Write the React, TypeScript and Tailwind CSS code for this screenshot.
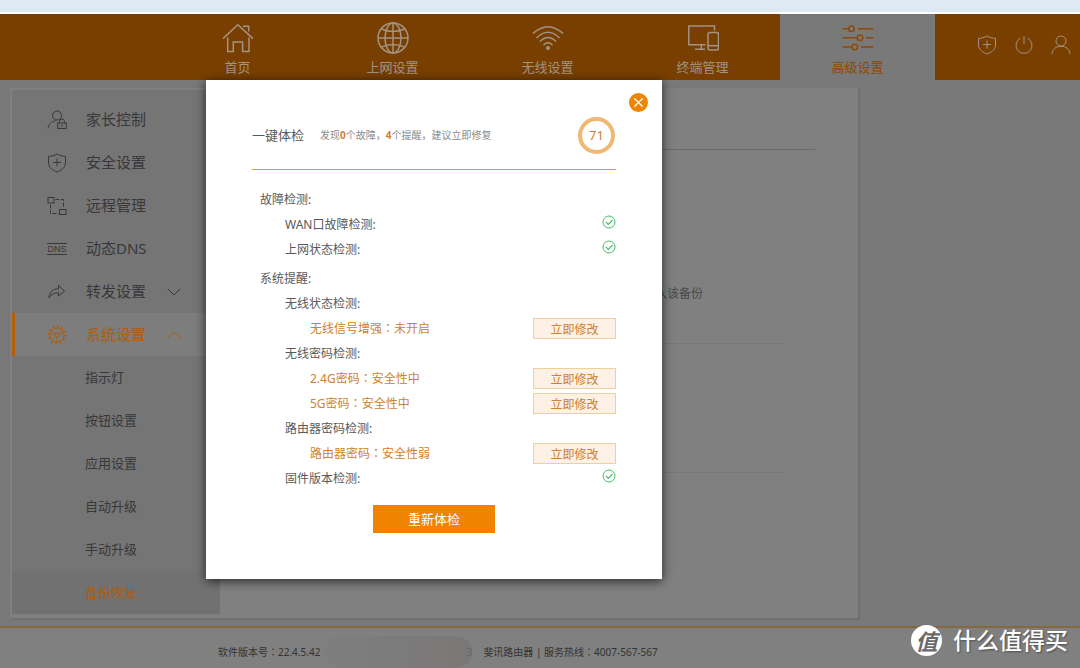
import type { ReactNode } from "react"
import { ChevronDown, ChevronUp, X } from "lucide-react"
import clsx from "clsx"

interface NavItem {
  label: string
  icon: ReactNode
  active?: boolean
}

interface SideItem {
  label: string
  icon: ReactNode
  active?: boolean
  chevron?: 'up' | 'down'
}

interface CheckRow {
  label: string
  value?: string
  level: 0 | 1 | 2
  status?: 'ok' | 'fix'
}

function NavIcon({ children }: { children: ReactNode }) {
  return (
    <svg className="size-8" viewBox="0 0 32 32" fill="none" stroke="currentColor" strokeWidth="1.5" aria-hidden="true">
      {children}
    </svg>
  )
}

function SmallIcon({ children }: { children: ReactNode }) {
  return (
    <svg className="size-5" viewBox="0 0 20 20" fill="none" stroke="currentColor" strokeWidth="1" aria-hidden="true">
      {children}
    </svg>
  )
}

// Full-width colon centred in its em box
function Colon() {
  return <span lang="zh-TW" className="font-['Noto_Sans_CJK_TC',sans-serif]">：</span>
}

const shieldPath = (
  <>
    <path d="M10 1 C7.5 2.6 4.5 3.3 1.5 3.4 V10 C1.5 14.5 6 17.6 10 19 C14 17.6 18.5 14.5 18.5 10 V3.4 C15.5 3.3 12.5 2.6 10 1 Z" />
    <path d="M10 5.5 V13.5 M6 9.5 H14" />
  </>
)

const navItems: NavItem[] = [
  {
    label: '首页',
    icon: (
      <NavIcon>
        <path d="M1 16.6 L15.8 2.8 L31 16.6 M21 4.2 H26.7 V9.5 M5.7 15.5 V29.5 H11.3 V20 H20.6 V29.5 H27 V15.5" />
      </NavIcon>
    ),
  },
  {
    label: '上网设置',
    icon: (
      <NavIcon>
        <circle cx="16" cy="16" r="15" />
        <ellipse cx="16" cy="16" rx="8" ry="15" />
        <path d="M16 1 V31 M1 16 H31 M4.5 7 Q16 12 27.5 7 M4.5 25 Q16 20 27.5 25" />
      </NavIcon>
    ),
  },
  {
    label: '无线设置',
    icon: (
      <NavIcon>
        <path d="M1 11.5 Q16 -2 31 11.5 M4.5 16 Q16 4.5 27.5 16 M8 19.5 Q16 11.5 24 19.5 M11.5 23 Q16 18.5 20.5 23" />
        <circle cx="16" cy="26" r="1.3" fill="currentColor" />
      </NavIcon>
    ),
  },
  {
    label: '终端管理',
    icon: (
      <NavIcon>
        <path d="M27.5 8.5 V4 H1.8 V22.7 H18.5 M14.3 23 V27 M8 27.3 H18" />
        <rect x="21" y="10.5" width="10.5" height="17.5" rx="2" />
        <path d="M21 23.7 H31.5" />
      </NavIcon>
    ),
  },
  {
    label: '高级设置',
    active: true,
    icon: (
      <NavIcon>
        <path d="M0.5 6.7 H6.5 M16 6.7 H31.5 M0.5 15.7 H15 M24 15.7 H31.5 M0.5 25 H9.7 M19 25 H31.5" />
        <circle cx="9.5" cy="6.7" r="2.8" />
        <circle cx="18" cy="15.7" r="2.8" />
        <circle cx="12.8" cy="25" r="2.8" />
      </NavIcon>
    ),
  },
]

const tools = [
  { label: '安全', icon: <SmallIcon>{shieldPath}</SmallIcon> },
  {
    label: '退出',
    icon: (
      <SmallIcon>
        <path d="M6.5 3.2 A8 8 0 1 0 13.5 3.2 M10 1 V9" />
      </SmallIcon>
    ),
  },
  {
    label: '用户',
    icon: (
      <SmallIcon>
        <circle cx="10" cy="6" r="5" />
        <path d="M1 19 C1.5 14 5 11.3 10 11.3 C15 11.3 18.5 14 19 19" />
      </SmallIcon>
    ),
  },
]

const sideItems: SideItem[] = [
  {
    label: '家长控制',
    icon: (
      <SmallIcon>
        <circle cx="10" cy="5.5" r="4.5" />
        <path d="M1 18.5 C1.5 14.5 4 11.5 8.5 10.8 M12.5 13 V11.5 A2.5 2.5 0 0 1 17.5 11.5 V13" />
        <rect x="10.8" y="13" width="8.4" height="5.5" />
        <path d="M15 14.5 V17" />
      </SmallIcon>
    ),
  },
  { label: '安全设置', icon: <SmallIcon>{shieldPath}</SmallIcon> },
  {
    label: '远程管理',
    icon: (
      <SmallIcon>
        <rect x="1" y="1.5" width="6" height="5.5" />
        <rect x="12.5" y="13.5" width="6.5" height="5" />
        <path d="M8.5 3.5 H16.5 V12" strokeDasharray="4 1.5" />
        <path d="M3.5 8.5 V17.5 H11.5" strokeDasharray="4 1.5" />
      </SmallIcon>
    ),
  },
  {
    label: '动态DNS',
    icon: <span className="border-y border-current font-['Liberation_Sans',sans-serif] text-[9px] leading-[10px]">DNS</span>,
  },
  {
    label: '转发设置',
    chevron: 'down',
    icon: (
      <SmallIcon>
        <path d="M2 16 C2.5 10 6 6.8 11.5 6.8 V3.5 L17.5 9 L11.5 14 V10.8 C7.5 10.8 4.5 12 2 16 Z" />
      </SmallIcon>
    ),
  },
  {
    label: '系统设置',
    active: true,
    chevron: 'up',
    icon: (
      <SmallIcon>
        <circle cx="10" cy="10" r="7" />
        <circle cx="10" cy="10" r="8.5" strokeWidth="2" strokeDasharray="1.5 2.95" />
        <circle cx="10" cy="10" r="2" />
        <path d="M8.3 9 L4.5 6.8 M11.7 9 L16 7.5 M10 12 V17" />
      </SmallIcon>
    ),
  },
]

const subItems = ['指示灯', '按钮设置', '应用设置', '自动升级', '手动升级', '备份恢复']

const faultRows: CheckRow[] = [
  { label: '故障检测:', level: 0 },
  { label: 'WAN口故障检测:', level: 1, status: 'ok' },
  { label: '上网状态检测:', level: 1, status: 'ok' },
]

const noticeRows: CheckRow[] = [
  { label: '系统提醒:', level: 0 },
  { label: '无线状态检测:', level: 1 },
  { label: '无线信号增强', value: '未开启', level: 2, status: 'fix' },
  { label: '无线密码检测:', level: 1 },
  { label: '2.4G密码', value: '安全性中', level: 2, status: 'fix' },
  { label: '5G密码', value: '安全性中', level: 2, status: 'fix' },
  { label: '路由器密码检测:', level: 1 },
  { label: '路由器密码', value: '安全性弱', level: 2, status: 'fix' },
  { label: '固件版本检测:', level: 1, status: 'ok' },
]

function Header() {
  return (
    <header className="flex h-[66px] bg-[#783f00] text-[#a39383]">
      <nav className="ml-40 flex">
        {navItems.map(item => (
          <a
            key={item.label}
            href="#"
            className={clsx(
              'flex w-[155px] flex-col items-center pt-2 text-[13px] leading-[26px]',
              item.active && 'bg-[#797979] text-[#8c4a08]'
            )}
          >
            {item.icon}
            {item.label}
          </a>
        ))}
      </nav>
      <div className="ml-auto flex items-center gap-[17px] pr-[9px] pb-1">
        {tools.map(tool => (
          <button key={tool.label} type="button" aria-label={tool.label}>
            {tool.icon}
          </button>
        ))}
      </div>
    </header>
  )
}

function Sidebar() {
  return (
    <aside className="w-52 shrink-0 bg-[#757575] pt-2 text-[#383838]">
      <ul>
        {sideItems.map(item => (
          <li key={item.label}>
            <a
              href="#"
              className={clsx(
                'flex h-[43px] items-center border-l-3 text-[15px]',
                item.active ? 'border-[#b56008] bg-[#7d7d7d] text-[#b05c0a]' : 'border-transparent'
              )}
            >
              <span className="ml-8 flex w-5 justify-center">{item.icon}</span>
              <span className="ml-[19px] w-[76px]">{item.label}</span>
              {item.chevron === 'down' && <ChevronDown className="size-6" strokeWidth={1} />}
              {item.chevron === 'up' && <ChevronUp className="size-6" strokeWidth={1} />}
            </a>
          </li>
        ))}
      </ul>
      <ul>
        {subItems.map(label => (
          <li key={label}>
            <a
              href="#"
              className={clsx(
                'flex h-[43px] items-center pl-[73px] text-[13px]',
                label === '备份恢复' && 'bg-[#717171] text-[#b05c0a]'
              )}
            >
              {label}
            </a>
          </li>
        ))}
      </ul>
    </aside>
  )
}

function Row({ row }: { row: CheckRow }) {
  return (
    <li
      className={clsx(
        'flex h-[25px] items-center justify-between',
        row.level === 0 && 'pl-2',
        row.level === 1 && 'pl-[33px]',
        row.level === 2 && 'pl-[58px] text-[#cf812c]'
      )}
    >
      <span>
        {row.label}
        {row.value && <><Colon />{row.value}</>}
      </span>
      {row.status === 'ok' && (
        <svg className="mb-[6px] size-[14px]" viewBox="0 0 14 14" fill="none" stroke="#45bf68" role="img" aria-label="正常">
          <circle cx="7" cy="7" r="6" />
          <path d="M3.8 6.8 L6.3 9.3 L10.5 5" strokeWidth="1.2" />
        </svg>
      )}
      {row.status === 'fix' && (
        <button type="button" className="h-[21px] w-[83px] border border-[#f0cf9f] bg-[#fdf0e5] pt-px leading-[19px]">
          立即修改
        </button>
      )}
    </li>
  )
}

function CheckDialog() {
  return (
    <div
      role="dialog"
      aria-labelledby="check-title"
      className="relative h-[499px] w-[456px] bg-white px-[46px] text-xs text-[#595959] shadow-[0_2px_10px_rgba(0,0,0,0.7)]"
    >
      <button
        type="button"
        aria-label="关闭"
        className="absolute top-[13px] right-[14px] flex size-[19px] items-center justify-center rounded-full bg-[#f08300] text-white"
      >
        <X className="size-[15px]" strokeWidth={2} />
      </button>
      <div className="flex h-[90px] items-center border-b border-b-[#c9a227] pt-[22px]">
        <h2 id="check-title" className="text-[13px]">一键体检</h2>
        <p className="ml-4 text-[10px] text-[#8a8a8a]">
          发现<b className="text-[#d0802c]">0</b>个故障，<b className="text-[#d0802c]">4</b>个提醒，建议立即修复
        </p>
        <span className="mr-px ml-auto flex size-[37px] items-center justify-center rounded-full border-4 border-[#f0b873] text-[13px] text-[#c97d3a]">
          71
        </span>
      </div>
      <ul className="pt-[17px]">
        {faultRows.map(row => <Row key={row.label} row={row} />)}
      </ul>
      <ul className="pt-1">
        {noticeRows.map(row => <Row key={row.label} row={row} />)}
      </ul>
      <button type="button" className="mx-auto mt-[14px] block h-7 w-[122px] bg-[#f08300] pt-px text-[13px] text-white">
        重新体检
      </button>
    </div>
  )
}

function Footer() {
  return (
    <footer className="relative flex h-[42px] items-center border-t-2 border-[#86683f] bg-[#808080] pt-2 pl-[218px] text-[10px] text-[#333333]">
      <span>软件版本号<Colon />22.4.5.42</span>
      <span className="ml-1 flex h-8 w-[148px] items-center justify-end rounded-2xl bg-linear-to-r from-[#7e7e7e] to-[#7a7877] text-[#666666]">
        3
      </span>
      <span className="ml-[11px]">斐讯路由器 | 服务热线<Colon />4007-567-567</span>
      <div className="absolute right-3 bottom-3 flex items-center gap-[11px] text-white">
        <span className="flex size-[31px] items-center justify-center rounded-full bg-white text-[22px] leading-none font-bold text-[#6a6a6a] italic">
          值
        </span>
        <span className="text-[23px] leading-[31px] font-medium [text-shadow:1px_1px_2px_rgba(0,0,0,0.4)]">什么值得买</span>
      </div>
    </footer>
  )
}

export default function App() {
  return (
    <div className="min-h-screen bg-[#808080] font-['Noto_Sans','Noto_Sans_CJK_SC',sans-serif]">
      <div className="h-[14px] border-b-2 border-white bg-[#dfe9f4]" />
      <Header />
      <main className="relative bg-[#797979] px-[10px] py-2">
        <div className="flex w-full max-w-[848px] border-2 border-[#808080] bg-[#808080] pb-[2px] shadow-[1px_1px_2px_#686868]">
          <Sidebar />
          <section className="flex-1 px-[41px] text-xs text-[#484848]">
            <div className="h-[60px] border-b border-[#6a6a6a]" />
            <div className="mr-[31px] flex h-[194px] items-center border-b border-[#777777] pt-[94px] pl-[394px]">
              <p className="whitespace-nowrap">入该备份</p>
            </div>
            <div className="mr-[31px] h-[129px] border-b border-[#777777]" />
          </section>
        </div>
        <div className="absolute inset-x-[10px] top-0 flex max-w-[848px] justify-center">
          <CheckDialog />
        </div>
      </main>
      <Footer />
    </div>
  )
}
